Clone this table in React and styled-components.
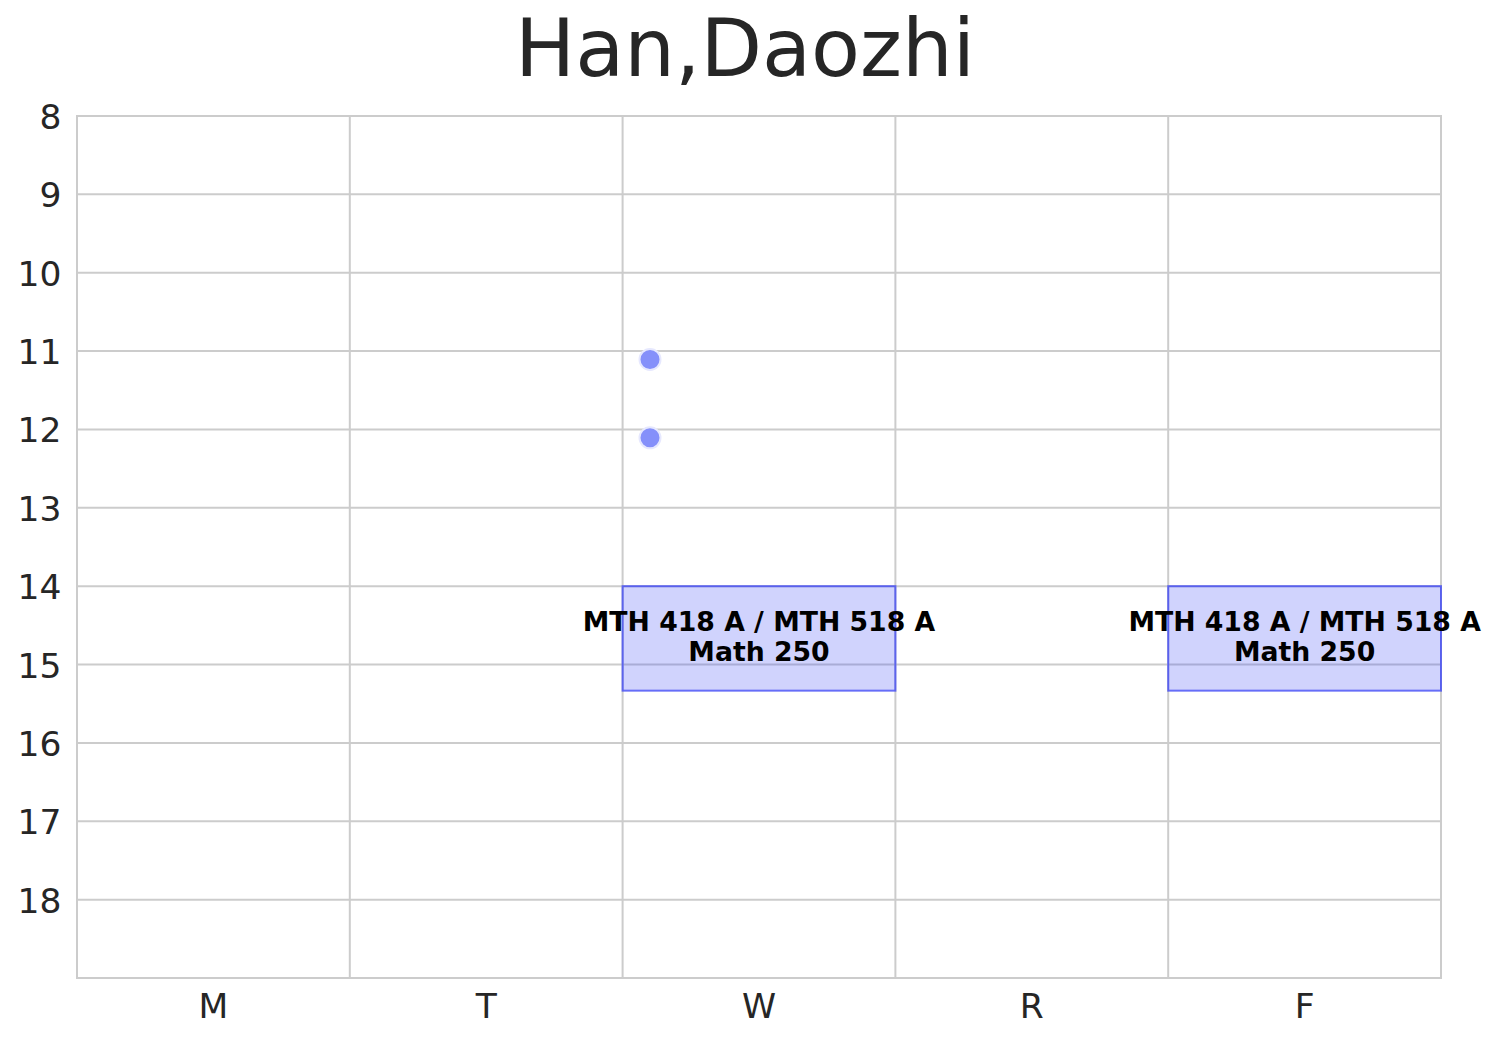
import React from "react";
import styled, { createGlobalStyle } from "styled-components";

const Global = createGlobalStyle`
  html, body { margin: 0; padding: 0; background: #ffffff; }
  body { font-family: "DejaVu Sans", "Liberation Sans", sans-serif; }
`;

const Page = styled.div`
  width: 1496px;
  height: 1040px;
  display: flex;
  flex-direction: column;
  background: #ffffff;
  overflow: hidden;
`;

const Title = styled.h1`
  margin: 0;
  padding: 4px 6px 0 0;
  height: 90px;
  line-height: 90px;
  text-align: center;
  font-family: "DejaVu Sans", sans-serif;
  font-weight: 400;
  font-size: 80px;
  color: #262626;
  flex: none;
`;

const Chart = styled.svg`
  display: block;
  flex: none;
  width: 1496px;
  height: 946px;
`;

const GridLine = styled.line`
  stroke: #cccccc;
  stroke-width: 2;
`;

const TickLabel = styled.text`
  font-family: "DejaVu Sans", sans-serif;
  font-size: 34.5px;
  fill: #262626;
  text-anchor: ${(p) => p.$anchor || "middle"};
`;

const EventBox = styled.rect`
  fill: rgba(60, 70, 245, 0.24);
  stroke: rgba(60, 70, 245, 0.75);
  stroke-width: 2;
`;

const EventLabel = styled.text`
  font-family: "DejaVu Sans", sans-serif;
  font-weight: 700;
  font-size: 26.7px;
  fill: #000000;
  text-anchor: middle;
`;

const Dot = styled.circle`
  fill: #8590fa;
  stroke: #e6e8fe;
  stroke-width: 2;
`;

const X0 = 77;
const X1 = 1441;
const Y0 = 116;
const Y1 = 978;
const START = 8;
const END = 19;
const DAYS = ["M", "T", "W", "R", "F"];
const colW = (X1 - X0) / DAYS.length;
const hourH = (Y1 - Y0) / (END - START);
const yOf = (h) => Y0 + (h - START) * hourH;
const xOf = (d) => X0 + d * colW;

const events = [
  { day: 2, start: 14, end: 15 + 20 / 60, lines: ["MTH 418 A / MTH 518 A", "Math 250"] },
  { day: 4, start: 14, end: 15 + 20 / 60, lines: ["MTH 418 A / MTH 518 A", "Math 250"] },
];

const dots = [
  { x: 650, h: 11.1 },
  { x: 650, h: 12.1 },
];

export default function App() {
  const hours = [];
  for (let h = START; h <= END; h++) hours.push(h);
  return (
    <Page>
      <Global />
      <Title>Han,Daozhi</Title>
      <Chart viewBox="0 94 1496 946" xmlns="http://www.w3.org/2000/svg">
        {hours.map((h) => (
          <GridLine key={"h" + h} x1={X0 - 1} x2={X1 + 1} y1={yOf(h)} y2={yOf(h)} />
        ))}
        {DAYS.map((d, i) => (
          <GridLine key={"v" + d} x1={xOf(i)} x2={xOf(i)} y1={Y0} y2={Y1} />
        ))}
        <GridLine x1={X1} x2={X1} y1={Y0} y2={Y1} />
        {hours.slice(0, -1).map((h) => (
          <TickLabel key={"yl" + h} $anchor="end" x={61.5} y={yOf(h) + 13}>
            {h}
          </TickLabel>
        ))}
        {DAYS.map((d, i) => (
          <TickLabel key={"xl" + d} x={xOf(i) + colW / 2} y={1018}>
            {d}
          </TickLabel>
        ))}
        {events.map((e, i) => {
          const top = yOf(e.start);
          const bottom = yOf(e.end);
          return (
            <g key={"e" + i}>
              <EventBox x={xOf(e.day)} y={top} width={colW} height={bottom - top} />
              <EventLabel x={xOf(e.day) + colW / 2} y={631}>
                {e.lines[0]}
              </EventLabel>
              <EventLabel x={xOf(e.day) + colW / 2} y={661}>
                {e.lines[1]}
              </EventLabel>
            </g>
          );
        })}
        {dots.map((d, i) => (
          <Dot key={"d" + i} cx={d.x} cy={yOf(d.h) + 0.5} r={10.5} />
        ))}
      </Chart>
    </Page>
  );
}
